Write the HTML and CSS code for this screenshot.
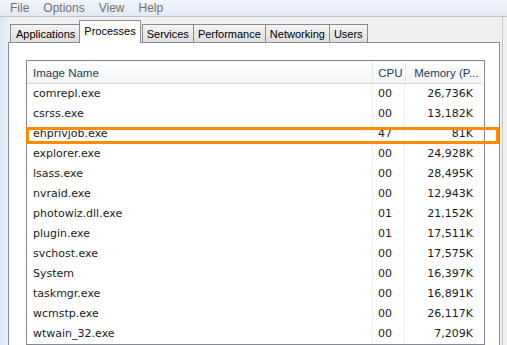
FILE: index.html
```html
<!DOCTYPE html>
<html lang="en">
<head>
    <meta charset="UTF-8">
    <title>Windows Task Manager</title>
    <link rel="stylesheet" href="styles.css">
</head>
<body>
    <div class="window">
        <div class="menu-bar">
            <span>File</span>
            <span>Options</span>
            <span>View</span>
            <span>Help</span>
        </div>

        <div class="body-area">
            <div class="tabs">
                <div class="tab">Applications</div>
                <div class="tab active">Processes</div>
                <div class="tab">Services</div>
                <div class="tab">Performance</div>
                <div class="tab">Networking</div>
                <div class="tab">Users</div>
            </div>

            <div class="panel">
                <div class="list">
                    <div class="list-head">
                        <div class="col-name">Image Name</div>
                        <div class="col-cpu">CPU</div>
                        <div class="col-mem">Memory (P...</div>
                    </div>
                    <div class="row"><div class="col-name">comrepl.exe</div><div class="col-cpu">00</div><div class="col-mem">26,736K</div></div>
                    <div class="row"><div class="col-name">csrss.exe</div><div class="col-cpu">00</div><div class="col-mem">13,182K</div></div>
                    <div class="row"><div class="col-name">ehprivjob.exe</div><div class="col-cpu">47</div><div class="col-mem">81K</div></div>
                    <div class="row"><div class="col-name">explorer.exe</div><div class="col-cpu">00</div><div class="col-mem">24,928K</div></div>
                    <div class="row"><div class="col-name">lsass.exe</div><div class="col-cpu">00</div><div class="col-mem">28,495K</div></div>
                    <div class="row"><div class="col-name">nvraid.exe</div><div class="col-cpu">00</div><div class="col-mem">12,943K</div></div>
                    <div class="row"><div class="col-name">photowiz.dll.exe</div><div class="col-cpu">01</div><div class="col-mem">21,152K</div></div>
                    <div class="row"><div class="col-name">plugin.exe</div><div class="col-cpu">01</div><div class="col-mem">17,511K</div></div>
                    <div class="row"><div class="col-name">svchost.exe</div><div class="col-cpu">00</div><div class="col-mem">17,575K</div></div>
                    <div class="row"><div class="col-name">System</div><div class="col-cpu">00</div><div class="col-mem">16,397K</div></div>
                    <div class="row"><div class="col-name">taskmgr.exe</div><div class="col-cpu">00</div><div class="col-mem">16,891K</div></div>
                    <div class="row"><div class="col-name">wcmstp.exe</div><div class="col-cpu">00</div><div class="col-mem">26,117K</div></div>
                    <div class="row"><div class="col-name">wtwain_32.exe</div><div class="col-cpu">00</div><div class="col-mem">7,209K</div></div>
                </div>

                <!-- highlight around the suspicious process -->
                <div class="highlight"></div>
            </div>
        </div>
    </div>
</body>
</html>
```

FILE: styles.css
```css
body {
    margin: 0;
    width: 507px;
    height: 345px;
    overflow: hidden;
    background: #f0f0f0;
    font-family: "Liberation Sans", Arial, sans-serif;
}

.window {
    height: 345px;
    display: flex;
    flex-direction: column;
}

.menu-bar {
    flex-shrink: 0;
    height: 16px;
    display: flex;
    gap: 14px;
    padding-left: 10px;
    background: linear-gradient(#f3f6fb, #e3e9f4);
    border-bottom: 1px solid #b9c2d2;
    font-size: 12px;
    line-height: 17px;
    color: #707070;
}

.body-area {
    flex: 1;
    min-height: 0;
    display: flex;
    flex-direction: column;
    padding-top: 4px;
    background: linear-gradient(to right, #dce7f4 0, #e8eef7 8px, #f0f0f0 8px);
    border-right: 1px solid #c8c8c8;
    margin-right: 4px;
    padding-right: 2px;
}

.tabs {
    flex-shrink: 0;
    display: flex;
    align-items: flex-end;
    padding-left: 10px;
    height: 21px;
    position: relative;
    z-index: 1;
}

.tab {
    height: 17px;
    padding: 0 4px;
    margin-right: -1px;
    border: 1px solid #898c95;
    border-bottom: none;
    background: linear-gradient(#f4f4f4, #dedede);
    font-size: 11px;
    line-height: 19px;
    color: #000;
}

.tab:first-child {
    padding: 0 5px;
}

.tab.active {
    height: 22px;
    padding: 0 4px;
    margin: 0 1px 0 -1px;
    background: #fff;
    line-height: 20px;
    position: relative;
    top: 1px;
}

.panel {
    flex: 1;
    min-height: 0;
    overflow: hidden;
    margin-left: 8px;
    background: #fff;
    border: 1px solid #898c95;
    border-bottom: none;
    padding: 17px 14px 0 17px;
    position: relative;
}

.list {
    border: 1px solid #828790;
    overflow: hidden;
    background: #fff;
}

.list-head,
.row {
    display: flex;
}

.list-head {
    height: 22px;
    margin-right: 2px;
    border-bottom: 1px solid #d5d5d5;
    background: linear-gradient(#ffffff, #f3f4f6);
    font-size: 11.5px;
    line-height: 24px;
    color: #1e395b;
}

.list-head .col-name,
.list-head .col-cpu {
    border-right: 1px solid #e3e6ea;
}

.list-head .col-mem {
    text-align: left;
    padding: 0 0 0 8px;
}

.row {
    height: 20px;
    font-family: "DejaVu Sans", Verdana, sans-serif;
    font-size: 11px;
    line-height: 20px;
    color: #1a1a1a;
}

.col-name {
    width: 340px;
    padding-left: 6px;
}

.col-cpu {
    width: 27px;
    padding-left: 5px;
}

.row .col-cpu {
    border-left: 1px solid #eef3fa;
    border-right: 1px solid #eef3fa;
    width: 26px;
    margin-left: -1px;
}

.col-mem {
    width: 68px;
    padding-right: 10px;
    text-align: right;
}

.highlight {
    position: absolute;
    left: 17px;
    top: 84px;
    width: 467px;
    height: 11px;
    border: 3px solid #ff8c00;
}
```
